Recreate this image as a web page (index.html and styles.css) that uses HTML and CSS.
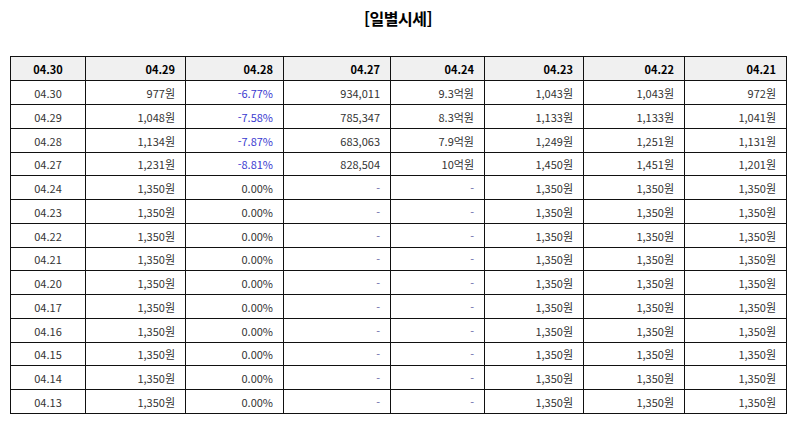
FILE: index.html
```html
<!DOCTYPE html>
<html lang="ko">
<head>
<meta charset="utf-8">
<link rel="stylesheet" href="styles.css">
</head>
<body>
<div class="page">
  <h2 class="title">[일별시세]</h2>
  <table class="daily">
    <colgroup>
      <col class="c1"><col class="c2"><col class="c3"><col class="c4"><col class="c5"><col class="c6"><col class="c7"><col class="c8">
    </colgroup>
    <thead>
      <tr><th class="first">04.30</th><th>04.29</th><th>04.28</th><th>04.27</th><th>04.24</th><th>04.23</th><th>04.22</th><th>04.21</th></tr>
    </thead>
    <tbody>
      <tr><td class="first">04.30</td><td>977원</td><td class="down">-6.77%</td><td>934,011</td><td>9.3억원</td><td>1,043원</td><td>1,043원</td><td>972원</td></tr>
      <tr><td class="first">04.29</td><td>1,048원</td><td class="down">-7.58%</td><td>785,347</td><td>8.3억원</td><td>1,133원</td><td>1,133원</td><td>1,041원</td></tr>
      <tr><td class="first">04.28</td><td>1,134원</td><td class="down">-7.87%</td><td>683,063</td><td>7.9억원</td><td>1,249원</td><td>1,251원</td><td>1,131원</td></tr>
      <tr><td class="first">04.27</td><td>1,231원</td><td class="down">-8.81%</td><td>828,504</td><td>10억원</td><td>1,450원</td><td>1,451원</td><td>1,201원</td></tr>
      <tr><td class="first">04.24</td><td>1,350원</td><td>0.00%</td><td class="dash">-</td><td class="dash">-</td><td>1,350원</td><td>1,350원</td><td>1,350원</td></tr>
      <tr><td class="first">04.23</td><td>1,350원</td><td>0.00%</td><td class="dash">-</td><td class="dash">-</td><td>1,350원</td><td>1,350원</td><td>1,350원</td></tr>
      <tr><td class="first">04.22</td><td>1,350원</td><td>0.00%</td><td class="dash">-</td><td class="dash">-</td><td>1,350원</td><td>1,350원</td><td>1,350원</td></tr>
      <tr><td class="first">04.21</td><td>1,350원</td><td>0.00%</td><td class="dash">-</td><td class="dash">-</td><td>1,350원</td><td>1,350원</td><td>1,350원</td></tr>
      <tr><td class="first">04.20</td><td>1,350원</td><td>0.00%</td><td class="dash">-</td><td class="dash">-</td><td>1,350원</td><td>1,350원</td><td>1,350원</td></tr>
      <tr><td class="first">04.17</td><td>1,350원</td><td>0.00%</td><td class="dash">-</td><td class="dash">-</td><td>1,350원</td><td>1,350원</td><td>1,350원</td></tr>
      <tr><td class="first">04.16</td><td>1,350원</td><td>0.00%</td><td class="dash">-</td><td class="dash">-</td><td>1,350원</td><td>1,350원</td><td>1,350원</td></tr>
      <tr><td class="first">04.15</td><td>1,350원</td><td>0.00%</td><td class="dash">-</td><td class="dash">-</td><td>1,350원</td><td>1,350원</td><td>1,350원</td></tr>
      <tr><td class="first">04.14</td><td>1,350원</td><td>0.00%</td><td class="dash">-</td><td class="dash">-</td><td>1,350원</td><td>1,350원</td><td>1,350원</td></tr>
      <tr><td class="first">04.13</td><td>1,350원</td><td>0.00%</td><td class="dash">-</td><td class="dash">-</td><td>1,350원</td><td>1,350원</td><td>1,350원</td></tr>
    </tbody>
  </table>
</div>
</body>
</html>
```

FILE: styles.css
```css
html, body {
  margin: 0;
  padding: 0;
  background: #ffffff;
}
.page {
  padding: 6px 8px 0 10px;
  font-family: "Noto Sans CJK KR", "Noto Sans", sans-serif;
  color: #333333;
}
.title {
  margin: 0;
  height: 24px;
  line-height: 24px;
  text-align: center;
  font-size: 16px;
  font-weight: bold;
  color: #000000;
  letter-spacing: -0.5px;
}
.daily {
  margin-top: 26px;
  border-collapse: collapse;
  width: 776px;
  table-layout: fixed;
  font-size: 11px;
}
.c1 { width: 75px; }
.c2 { width: 100px; }
.c3 { width: 98px; }
.c4 { width: 107px; }
.c5 { width: 94px; }
.c6 { width: 99px; }
.c7 { width: 101px; }
.c8 { width: 102px; }
.daily th,
.daily td {
  border: 1px solid #111111;
  height: 23px;
  padding: 0 10px 0 0;
  text-align: right;
  line-height: 14px;
  white-space: nowrap;
}
.daily tbody tr:nth-child(4n) td {
  height: 22px;
}
.daily th {
  background: #f0f0f0;
  color: #000000;
  font-weight: bold;
}
.daily .first {
  text-align: center;
  padding: 0;
}
.daily .down {
  color: #3a3ad0;
}
.daily .dash {
  color: #6a6aa8;
}
```
